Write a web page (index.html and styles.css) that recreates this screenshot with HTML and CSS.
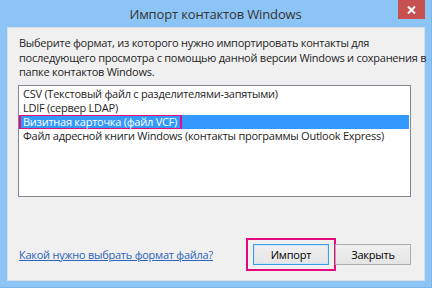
FILE: index.html
```html
<!DOCTYPE html>
<html lang="ru">
<head>
  <meta charset="UTF-8">
  <title>Импорт контактов Windows</title>
  <link rel="stylesheet" href="styles.css">
</head>
<body>
  <div class="window">
    <div class="titlebar">
      <span></span>
      <span class="title">Импорт контактов Windows</span>
      <button class="close" type="button" aria-label="Закрыть">
        <svg width="9" height="8" viewBox="0 0 9 8"><path d="M1 0.5 L8 7.5 M8 0.5 L1 7.5" stroke="#fff" stroke-width="2"/></svg>
      </button>
    </div>

    <div class="content">
      <p class="intro">Выберите формат, из которого нужно импортировать контакты для последующего просмотра с помощью данной версии Windows и сохранения в папке контактов Windows.</p>

      <ul class="list">
        <li>CSV (Текстовый файл с разделителями-запятыми)</li>
        <li>LDIF (сервер LDAP)</li>
        <li class="selected"><span class="mark">Визитная карточка (файл VCF)</span></li>
        <li>Файл адресной книги Windows (контакты программы Outlook Express)</li>
      </ul>

      <div class="footer">
        <a href="#" class="help">Какой нужно выбрать формат файла?</a>
        <div class="buttons">
          <span class="mark-btn"><button type="button" class="btn default">Импорт</button></span>
          <button type="button" class="btn">Закрыть</button>
        </div>
      </div>
    </div>
  </div>
</body>
</html>
```

FILE: styles.css
```css
:root {
  --frame-color: #8cc5f5;
  --panel-color: #f0f0f0;
  --text-color: #1e1e1e;
  --select-color: #3399ff;
  --mark-color: #e5097f;
  --font-family: 'Open Sans', 'Noto Sans', Arial, sans-serif;
}
body {
  margin: 0;
  font-family: var(--font-family);
  color: var(--text-color);
}
.window {
  width: 432px;
  height: 288px;
  box-sizing: border-box;
  background-color: var(--frame-color);
  border-right: 1px solid #7db6e6;
  border-bottom: 1px solid #7db6e6;
  display: flex;
  flex-direction: column;
}
.titlebar {
  height: 27px;
  display: grid;
  grid-template-columns: 1fr auto 1fr;
}
.title {
  font-size: 13px;
  letter-spacing: -0.15px;
  line-height: 28px;
  color: #333;
}
.close {
  justify-self: end;
  width: 27px;
  height: 19px;
  margin-right: 6px;
  padding: 0;
  border: none;
  background-color: #c75050;
  display: flex;
  align-items: center;
  justify-content: center;
}
.content {
  flex: 1;
  margin: 0 6px 6px 7px;
  padding: 8px 13px 0 10px;
  background-color: var(--panel-color);
  border: 1px solid #d6dde6;
  display: flex;
  flex-direction: column;
  font-size: 11px;
  letter-spacing: -0.25px;
}
.intro {
  margin: 0 -22px 0 1px;
  line-height: 14.5px;
}
.list {
  list-style: none;
  margin: 5px 0 0;
  padding: 1px 0;
  height: 108px;
  background-color: #fff;
  border: 1px solid #828790;
}
.list li {
  height: 14px;
  line-height: 14px;
  padding-left: 4px;
  white-space: nowrap;
}
.list li.selected {
  background-color: var(--select-color);
  color: #fff;
  margin-right: 1px;
  padding-left: 0;
}
.mark {
  display: inline-block;
  height: 12px;
  line-height: 12px;
  padding: 0 3px 0 2px;
  border: 2px solid var(--mark-color);
  border-top-width: 1px;
  border-bottom-width: 1px;
}
.footer {
  display: flex;
  align-items: center;
  justify-content: space-between;
  margin-top: 41px;
}
.help {
  margin-left: 1px;
  color: #2d62b8;
  text-decoration: underline;
}
.buttons {
  display: flex;
  align-items: center;
}
.mark-btn {
  display: flex;
  padding: 4px 5px;
  border: 2px solid var(--mark-color);
  margin-right: -1px;
}
.btn {
  width: 76px;
  height: 21px;
  padding: 0;
  font-family: var(--font-family);
  font-size: 11px;
  letter-spacing: -0.2px;
  color: #000;
  background: linear-gradient(#f0f0f0, #e5e5e5);
  border: 1px solid #acacac;
  border-radius: 0;
}
.btn.default {
  border-color: #3c9fe6;
  box-shadow: inset 0 0 0 1px #cfe6f8;
}
```
